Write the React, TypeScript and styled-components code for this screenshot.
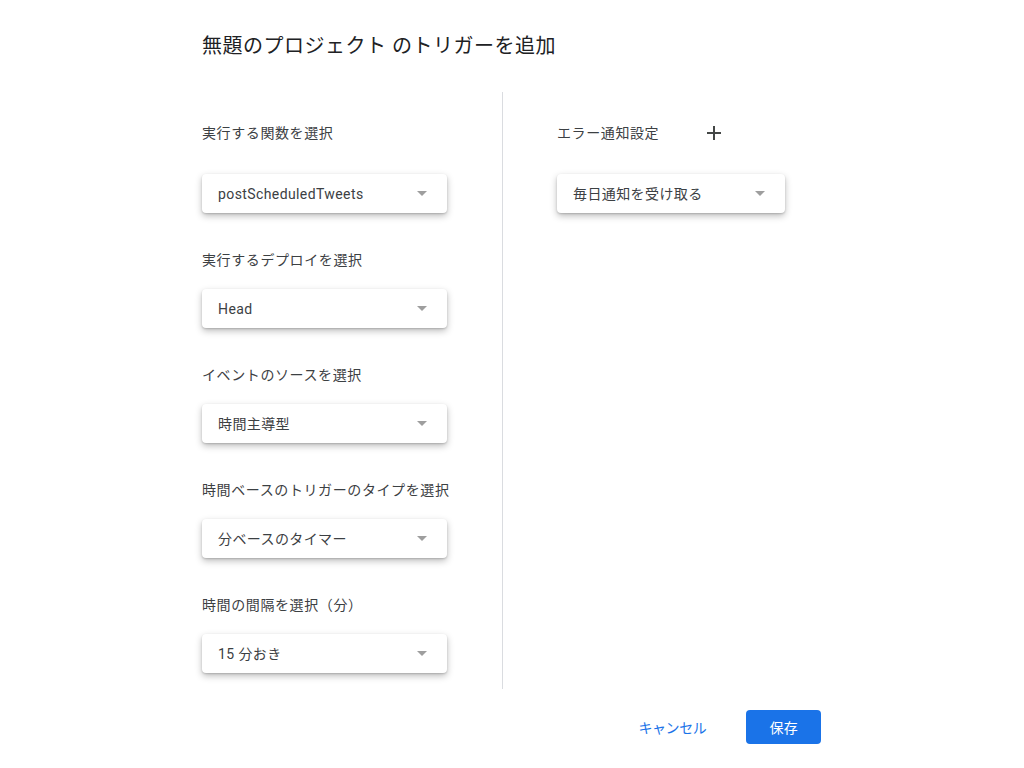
import styled, { createGlobalStyle } from 'styled-components';

const FIELDS = [
  { label: '実行する関数を選択', value: 'postScheduledTweets' },
  { label: '実行するデプロイを選択', value: 'Head' },
  { label: 'イベントのソースを選択', value: '時間主導型' },
  { label: '時間ベースのトリガーのタイプを選択', value: '分ベースのタイマー' },
  { label: '時間の間隔を選択（分）', value: '15 分おき' },
];

const GlobalStyle = createGlobalStyle`
  html, body {
    margin: 0;
    padding: 0;
    background: #ffffff;
  }
  body {
    font-family: Roboto, "Noto Sans CJK JP", sans-serif;
    -webkit-font-smoothing: antialiased;
  }
`;

const Arrow = () => (
  <svg width="10" height="5" viewBox="0 0 10 5">
    <path d="M0 0h10L5 5z" fill="#9e9e9e" />
  </svg>
);

const PlusIcon = () => (
  <svg width="24" height="24" viewBox="0 0 24 24">
    <path d="M19 13h-6v6h-2v-6H5v-2h6V5h2v6h6v2z" fill="#444746" />
  </svg>
);

const Select = ({ value, width }: { value: string; width: number }) => (
  <SelectBox $width={width}>
    <span>{value}</span>
    <Arrow />
  </SelectBox>
);

const App = () => {
  return (
    <>
      <GlobalStyle />
      <Dialog>
        <Title>無題のプロジェクト のトリガーを追加</Title>
        <Columns>
          <LeftColumn>
            {FIELDS.map((field, index) => (
              <Field key={`field-${index}`} $first={index === 0}>
                <Label>{field.label}</Label>
                <Select value={field.value} width={245} />
              </Field>
            ))}
          </LeftColumn>
          <RightColumn>
            <Field $first>
              <HeaderRow>
                <Label>エラー通知設定</Label>
                <IconButton aria-label="追加">
                  <PlusIcon />
                </IconButton>
              </HeaderRow>
              <Select value="毎日通知を受け取る" width={228} />
            </Field>
          </RightColumn>
        </Columns>
        <Actions>
          <TextButton>キャンセル</TextButton>
          <PrimaryButton>保存</PrimaryButton>
        </Actions>
      </Dialog>
    </>
  );
};

export default App;

const Dialog = styled.div`
  width: 619px;
  padding: 32px 0 0 202px;
  display: flex;
  flex-direction: column;
`;

const Title = styled.h1`
  margin: 0;
  font-size: 20px;
  line-height: 28px;
  font-weight: 400;
  color: #202124;
  letter-spacing: 0.5px;
`;

const Columns = styled.div`
  display: flex;
  margin-top: 32px;
`;

const LeftColumn = styled.div`
  width: 301px;
  box-sizing: border-box;
  padding: 31px 0 16px;
  border-right: 1px solid #dadce0;
  display: flex;
  flex-direction: column;
  gap: 37px;
`;

const RightColumn = styled.div`
  padding: 31px 0 0 54px;
  display: flex;
  flex-direction: column;
`;

const Field = styled.div<{ $first?: boolean }>`
  display: flex;
  flex-direction: column;
  gap: ${({ $first }) => ($first ? '31px' : '19px')};
`;

const HeaderRow = styled.div`
  display: flex;
  align-items: center;
  height: 20px;
`;

const Label = styled.div`
  font-size: 14px;
  line-height: 20px;
  color: #3c4043;
  letter-spacing: 0.6px;
`;

const IconButton = styled.button`
  width: 36px;
  height: 36px;
  margin-left: 37px;
  padding: 0;
  border: none;
  background: transparent;
  display: flex;
  align-items: center;
  justify-content: center;
  cursor: pointer;
`;

const SelectBox = styled.div<{ $width: number }>`
  width: ${({ $width }) => $width}px;
  height: 39px;
  box-sizing: border-box;
  padding: 0 20px 0 16px;
  display: flex;
  align-items: center;
  justify-content: space-between;
  background: #ffffff;
  border-radius: 4px;
  box-shadow: 0 1px 2px rgba(0, 0, 0, 0.16), 0 3px 7px rgba(0, 0, 0, 0.26);
  font-size: 14px;
  color: #3c4043;
  letter-spacing: 0.4px;

  span {
    line-height: 20px;
  }
`;

const Actions = styled.div`
  display: flex;
  justify-content: flex-end;
  align-items: center;
  gap: 24px;
  margin-top: 21px;
`;

const TextButton = styled.button`
  height: 34px;
  padding: 0 16px;
  border: none;
  background: transparent;
  font-family: Roboto, "Noto Sans CJK JP", sans-serif;
  font-size: 14px;
  color: #1a73e8;
  letter-spacing: -0.4px;
  cursor: pointer;
`;

const PrimaryButton = styled.button`
  height: 34px;
  padding: 0 23px;
  border: none;
  border-radius: 4px;
  background: #1a73e8;
  font-family: Roboto, "Noto Sans CJK JP", sans-serif;
  font-size: 14px;
  color: #ffffff;
  letter-spacing: 0.3px;
  cursor: pointer;
`;
